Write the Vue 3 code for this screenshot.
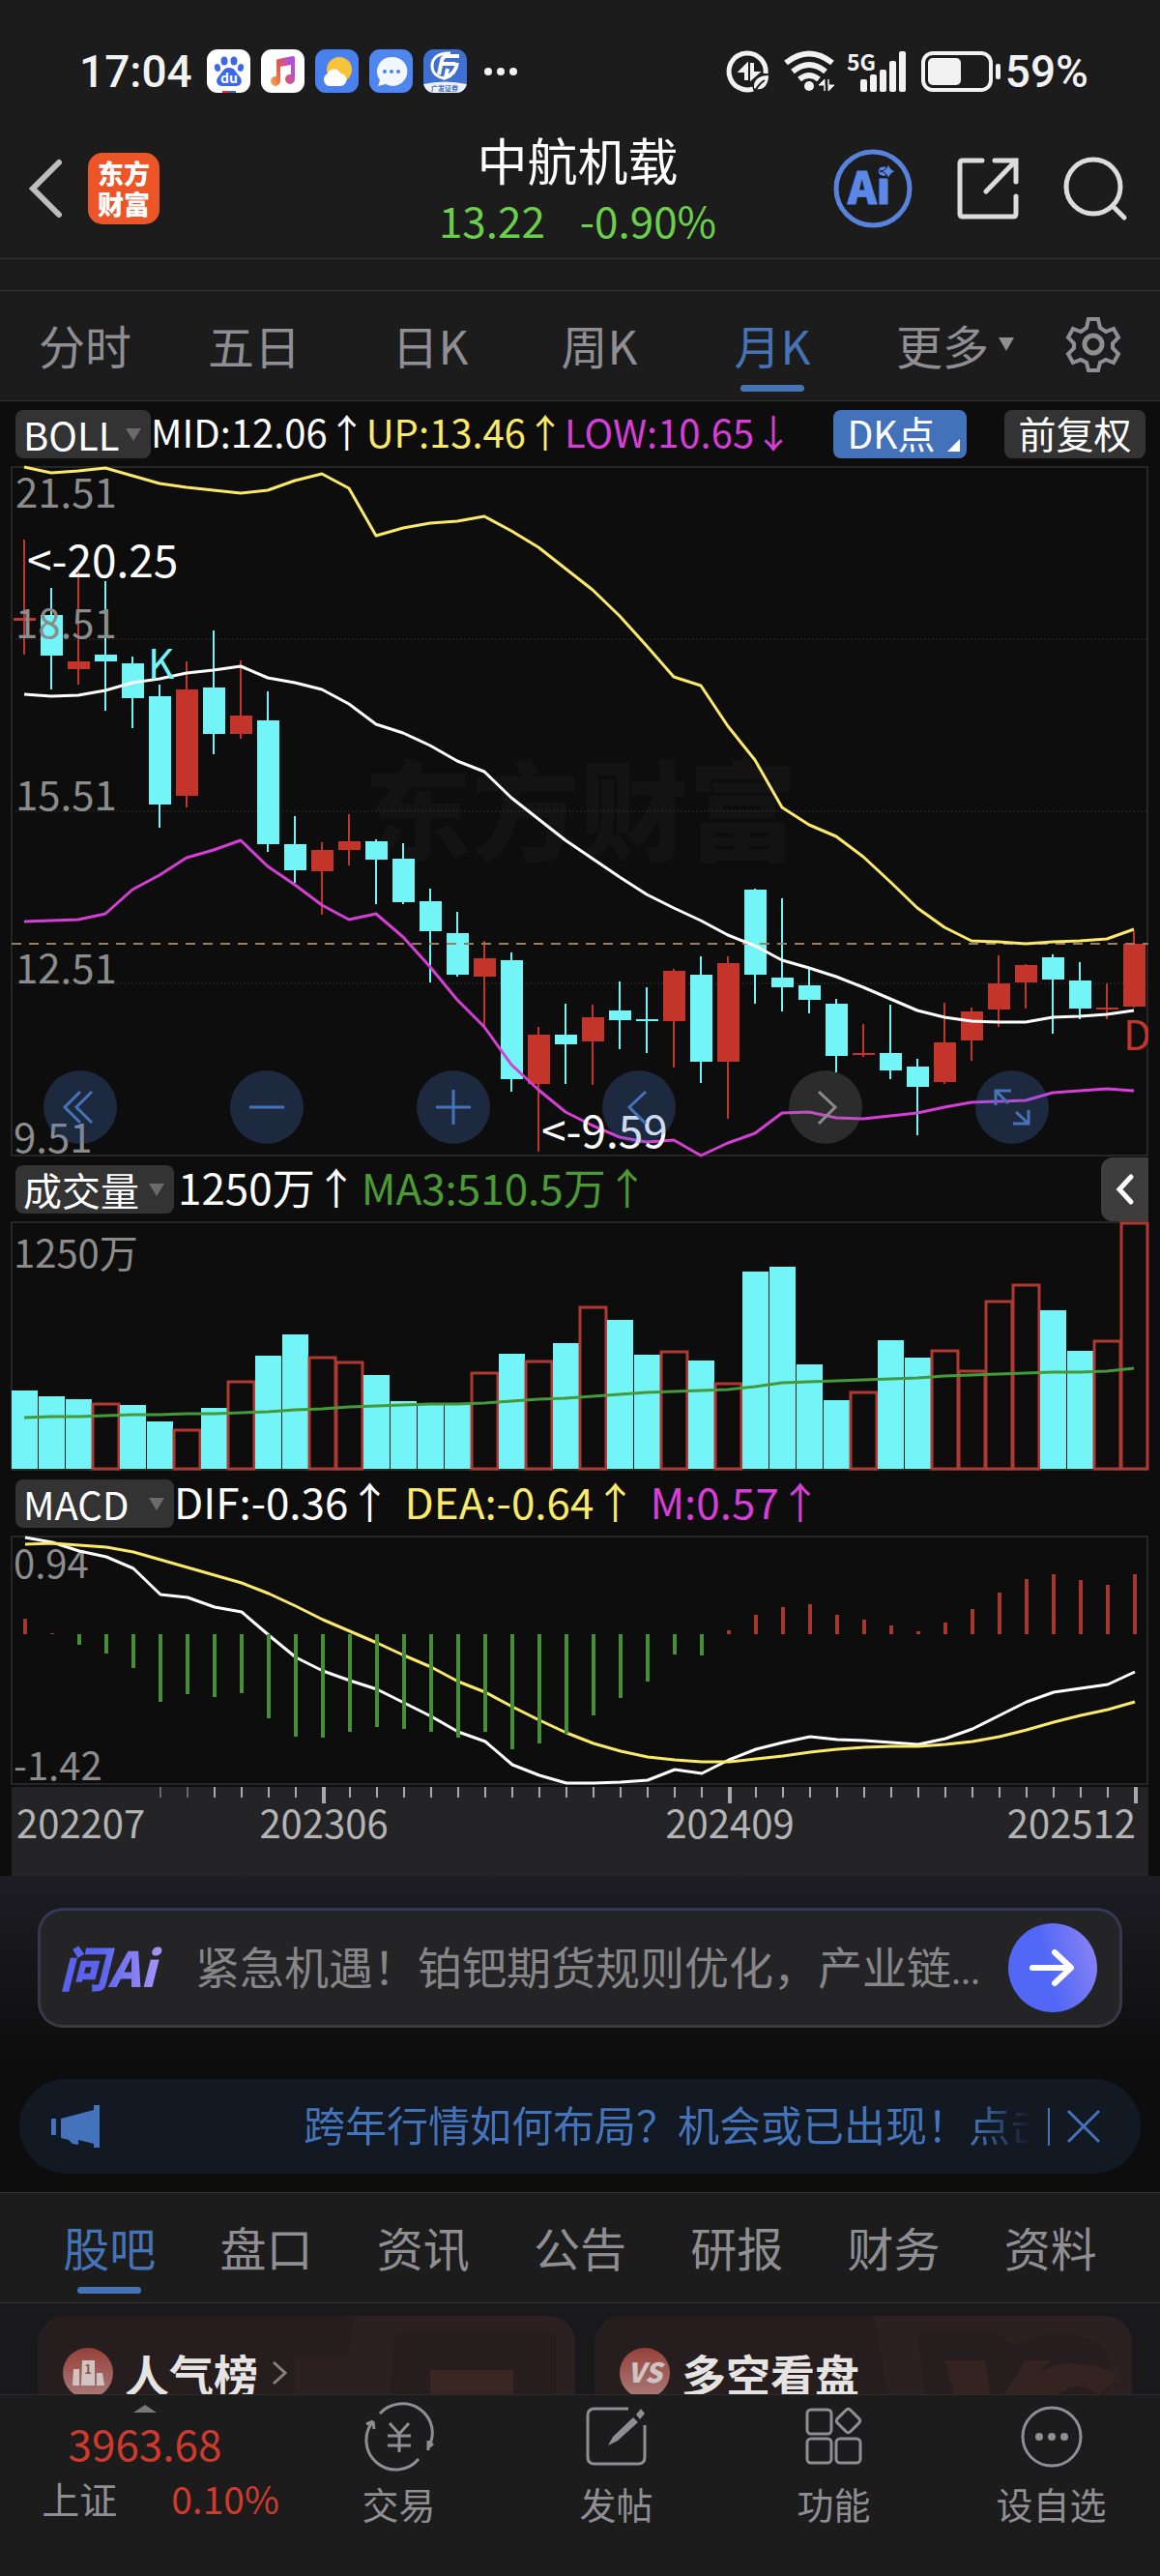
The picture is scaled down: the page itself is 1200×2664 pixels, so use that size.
<script setup>
const STEP = 28
const cx = (i) => 25 + STEP * i

// Monthly candles: [rising, high, body top, body bottom, low] in chart units
const candles = [
  [1, 76, 157, 160, 195], [0, 126, 154, 196, 231], [1, 108, 202, 210, 226], [0, 119, 195, 202, 253],
  [0, 197, 204, 240, 271], [0, 226, 238, 350, 374], [1, 202, 231, 341, 353], [0, 170, 229, 277, 298],
  [1, 201, 258, 277, 282], [0, 233, 263, 391, 399], [0, 362, 391, 418, 431], [1, 389, 397, 419, 464],
  [1, 360, 388, 397, 413], [0, 386, 388, 407, 453], [0, 390, 406, 451, 453], [0, 437, 450, 481, 534],
  [0, 461, 483, 526, 528], [1, 491, 509, 528, 580], [0, 503, 511, 634, 647], [1, 580, 588, 639, 709],
  [0, 556, 588, 598, 639], [1, 557, 570, 595, 640], [0, 533, 563, 573, 603], [0, 539, 572, 574, 607],
  [1, 520, 522, 574, 622], [0, 507, 526, 616, 638], [1, 507, 514, 616, 675], [0, 437, 438, 526, 556],
  [0, 447, 529, 539, 564], [0, 520, 537, 552, 566], [0, 551, 556, 610, 627], [1, 577, 607, 609, 611],
  [0, 557, 607, 625, 634], [0, 613, 621, 642, 692], [1, 555, 596, 637, 639], [1, 560, 564, 594, 615],
  [1, 506, 535, 562, 580], [1, 515, 516, 534, 561], [0, 505, 508, 531, 587], [0, 513, 532, 561, 572],
  [1, 535, 560, 562, 572], [1, 481, 494, 559, 560],
].map(([up, high, top, bottom, low], i) => ({ up, high, top, bottom, low, x: cx(i) }))

const bollUp = [1, 7, 5, 2, 10, 18, 22, 25, 28, 25, 15, 8, 23, 72, 64, 59, 57, 52, 67, 84, 106, 128, 155, 186, 218, 227, 269, 304, 353, 371, 383, 404, 430, 457, 477, 491, 492, 494, 492, 491, 489, 479]
const bollMid = [236, 238, 237, 232, 224, 220, 214, 211, 207, 219, 224, 231, 246, 267, 276, 289, 305, 316, 343, 365, 387, 406, 425, 443, 457, 470, 485, 496, 511, 519, 528, 539, 551, 563, 570, 574, 575, 575, 570, 569, 567, 563]
const bollLow = [471, 470, 469, 463, 438, 423, 405, 397, 387, 414, 433, 454, 469, 463, 487, 518, 552, 580, 619, 645, 668, 682, 694, 699, 697, 713, 700, 690, 669, 668, 674, 675, 672, 669, 663, 658, 657, 656, 648, 646, 644, 646]

const volumeTops = [175, 181, 184, 189, 190, 207, 216, 193, 166, 139, 117, 141, 146, 159, 186, 189, 189, 157, 137, 145, 126, 89, 102, 138, 135, 144, 168, 52, 47, 148, 185, 177, 123, 141, 134, 155, 83, 66, 92, 134, 124, 2]
const volumeRed = new Set([3, 6, 8, 11, 12, 17, 19, 21, 24, 26, 31, 34, 35, 36, 37, 40, 41])
const volumes = volumeTops.map((top, i) => ({ top, red: volumeRed.has(i), x: 12 + STEP * i }))
const volumeMa = [203, 202, 202, 201, 200, 200, 199, 199, 198, 197, 195, 194, 192, 191, 190, 189, 189, 188, 186, 184, 183, 181, 179, 177, 176, 175, 174, 171, 167, 166, 165, 164, 163, 162, 160, 159, 158, 157, 156, 156, 155, 152]

const macdEnds = [86, 101, 113, 122, 137, 172, 164, 167, 163, 189, 208, 209, 203, 198, 200, 203, 209, 203, 221, 215, 205, 186, 168, 151, 123, 124, 98, 82, 74, 71, 82, 87, 93, 99, 90, 76, 59, 45, 40, 46, 51, 40]
const macdBars = macdEnds.map((end, i) => ({ end, x: cx(i) + 1, up: end < 102 }))
const dif = [2, 7, 16, 22, 34, 61, 64, 74, 79, 103, 126, 140, 150, 159, 173, 187, 203, 213, 237, 248, 256, 256, 255, 253, 242, 246, 232, 221, 214, 208, 211, 212, 214, 216, 210, 200, 186, 172, 162, 158, 154, 141]
const dea = [9, 8, 10, 12, 17, 25, 33, 41, 49, 60, 73, 87, 99, 111, 124, 136, 151, 162, 177, 191, 204, 215, 223, 229, 232, 234, 234, 231, 228, 224, 221, 219, 218, 218, 216, 213, 208, 201, 193, 186, 180, 172]

const line = (ys, shift = 0) => ys.map((y, i) => `${cx(i) + shift},${y}`).join(' ')

const ticks = Array.from({ length: 37 }, (_, k) => {
  const i = k + 5
  return { x: cx(i) + 1, major: i === 11 || i === 26 || i === 41, faint: i < 7 }
})

const periods = ['分时', '五日', '日K', '周K', '月K']
const sections = ['股吧', '盘口', '资讯', '公告', '研报', '财务', '资料']
</script>

<template>
  <div class="app">
    <div class="status">
      <span class="clock">17:04</span>
      <svg class="app-icon first" viewBox="0 0 45 45">
        <rect width="45" height="45" rx="11" fill="#fff" />
        <g fill="#3c68e8">
          <ellipse cx="18" cy="12" rx="3.5" ry="4.5" /><ellipse cx="28" cy="12" rx="3.5" ry="4.5" />
          <ellipse cx="11" cy="19" rx="3" ry="4" transform="rotate(-15 11 19)" /><ellipse cx="35" cy="19" rx="3" ry="4" transform="rotate(15 35 19)" />
          <path d="M23 19c6 0 7 5 10 8 5 5 3 11-3 11H16c-6 0-8-6-3-11 3-3 4-8 10-8z" />
        </g>
        <text x="23" y="35" text-anchor="middle" font-size="14" font-weight="700" fill="#fff">du</text>
        <path d="M16 43h7v2h-7z" fill="#d33" /><path d="M23 43h7v2h-7z" fill="#36c" />
      </svg>
      <svg class="app-icon" viewBox="0 0 45 45">
        <defs><linearGradient id="music" x1="0" y1="1" x2="1" y2="0.6"><stop offset="0" stop-color="#f6b04c" /><stop offset=".5" stop-color="#e35a4c" /><stop offset="1" stop-color="#b94be0" /></linearGradient></defs>
        <rect width="45" height="45" rx="11" fill="#fff" />
        <path d="M16 12q0-2 2-2l15-3q2 0 2 2v22a5 5 0 1 1-4-5V16l-11 2v15a5 5 0 1 1-4-5z" fill="url(#music)" />
      </svg>
      <svg class="app-icon" viewBox="0 0 45 45">
        <rect width="45" height="45" rx="11" fill="#4a80ee" />
        <circle cx="25" cy="21" r="13" fill="#f8c33c" />
        <path d="M14 38a7 7 0 0 1-1-13 7 7 0 0 1 13 0 6 6 0 0 1 0 13z" fill="#fff" />
      </svg>
      <svg class="app-icon" viewBox="0 0 45 45">
        <rect width="45" height="45" rx="11" fill="#4f86f0" />
        <path d="M23 8a15 15 0 1 1-6 28l-8 2 2-6A15 15 0 0 1 23 8z" fill="#f2f6fe" />
        <g fill="#4f7ff0"><circle cx="16" cy="23" r="2" /><circle cx="23" cy="23" r="2" /><circle cx="30" cy="23" r="2" /></g>
      </svg>
      <svg class="app-icon" viewBox="0 0 45 45">
        <defs><clipPath id="gf"><rect width="45" height="45" rx="11" /></clipPath></defs>
        <g clip-path="url(#gf)">
          <rect width="45" height="45" fill="#3f6fd2" />
          <path d="M0 36q22-5 45 0v9H0z" fill="#eef1f8" />
          <path d="M28 4C16 3 9 9 9 17s6 12 13 13" fill="none" stroke="#fff" stroke-width="3" />
          <path d="M37 7H24q-4 0-5 5l-3 14M33 15H20M35 14q-2 12-12 15l2-9" fill="none" stroke="#fff" stroke-width="4" />
        </g>
        <text x="22" y="43" text-anchor="middle" font-size="7" font-weight="700" fill="#3f6fd2">广发证券</text>
      </svg>
      <svg class="dots" viewBox="0 0 34 8"><circle cx="4" cy="4" r="4" /><circle cx="17" cy="4" r="4" /><circle cx="30" cy="4" r="4" /></svg>

      <svg class="data-icon" viewBox="0 0 44 44">
        <path d="M39 24A19 19 0 1 0 26 40" fill="none" stroke="#f2f2f2" stroke-width="5" />
        <path d="M20 30V14l-8 8h6v8zM24 14v16l8-7h-6v-9z" fill="#f2f2f2" stroke="#f2f2f2" stroke-width="2" />
        <path d="M27 39c-1-9 6-13 15-13 0 9-5 16-13 14z" fill="#f2f2f2" /><path d="M28 42q4-7 10-11" stroke="#1c1c1c" stroke-width="2" fill="none" />
      </svg>
      <svg class="wifi-icon" viewBox="0 0 54 44">
        <g fill="none" stroke="#f2f2f2" stroke-width="6"><path d="M2 13Q26-6 50 13" /><path d="M9 22q17-14 34 0" /><path d="M16 30q10-8 20 0" /></g>
        <circle cx="26" cy="37" r="5" fill="#f2f2f2" />
        <path d="M42 42V30l-6 6h6zM46 30v12l6-6h-6z" fill="#f2f2f2" stroke="#f2f2f2" />
      </svg>
      <svg class="signal-icon" viewBox="0 0 62 44">
        <text x="0" y="21" font-size="23" font-weight="700" fill="#f2f2f2">5G</text>
        <g fill="#f2f2f2"><rect x="14" y="30" width="7" height="13" rx="2" /><rect x="24" y="25" width="7" height="18" rx="2" /><rect x="34" y="20" width="7" height="23" rx="2" /><rect x="44" y="11" width="7" height="32" rx="2" /><rect x="54" y="1" width="7" height="42" rx="2" /></g>
      </svg>
      <svg class="battery-icon" viewBox="0 0 84 44">
        <rect x="2" y="3" width="70" height="38" rx="10" fill="none" stroke="#f2f2f2" stroke-width="4" />
        <rect x="7" y="8" width="34" height="28" rx="5" fill="#f2f2f2" /><rect x="77" y="14" width="5" height="16" rx="2" fill="#f2f2f2" />
      </svg>
      <span class="clock">59%</span>
    </div>

    <header class="header">
      <div class="header-side">
        <button class="plain back" aria-label="返回">
          <svg viewBox="0 0 36 62"><path d="M32 4L5 31l27 27" fill="none" stroke="#bdbdbd" stroke-width="6" stroke-linecap="round" /></svg>
        </button>
        <a class="brand" href="#"><span>东方</span><span>财富</span></a>
      </div>
      <div class="quote">
        <h1>中航机载</h1>
        <p><span>13.22</span><span>-0.90%</span></p>
      </div>
      <div class="header-side right">
        <button class="plain ai" aria-label="Ai">
          <svg viewBox="0 0 82 82">
            <circle cx="41" cy="41" r="38" fill="none" stroke="#5783dd" stroke-width="5" />
            <text x="15" y="57" font-size="45" font-weight="900" fill="#5b88e6" stroke="#5b88e6" stroke-width="1">Ai</text>
            <path d="M57 14q1 9 9 9-8 1-9 9-1-8-9-9 8 0 9-9z" fill="#5b88e6" stroke="#1c1c1c" stroke-width="1" />
          </svg>
        </button>
        <button class="plain share" aria-label="分享">
          <svg viewBox="0 0 64 64"><path d="M26 3H6q-3 0-3 3v52q0 3 3 3h52q3 0 3-3V40M39 3h22v22M61 3L30 35" fill="none" stroke="#dcdcdc" stroke-width="5" stroke-linecap="round" /></svg>
        </button>
        <button class="plain search" aria-label="搜索">
          <svg viewBox="0 0 66 66"><circle cx="31" cy="31" r="28" fill="none" stroke="#dcdcdc" stroke-width="5" /><path d="M51 51l12 12" stroke="#dcdcdc" stroke-width="5" stroke-linecap="round" /></svg>
        </button>
      </div>
    </header>
    <div class="strip"></div>

    <nav class="periods">
      <button v-for="p in periods" :key="p" class="plain tab" :class="{ active: p === '月K' }">{{ p }}</button>
      <button class="plain tab more">更多<svg viewBox="0 0 16 14"><path d="M0 0h16L8 14z" fill="#8e8e93" /></svg></button>
      <button class="plain tab gear" aria-label="设置">
        <svg viewBox="0 0 58 58" fill="none" stroke="#8e8e93" stroke-width="4"><path d="M24 3h10l2 9 6 4 8-3 5 9-6 6v5l6 6-5 9-8-3-6 3-2 8H24l-2-8-6-3-8 3-5-9 6-6v-5l-6-6 5-9 8 3 6-4z" /><circle cx="29" cy="29" r="9" stroke-width="5" /></svg>
      </button>
    </nav>

    <main class="charts">
      <div class="legend boll">
        <label class="picker"><select aria-label="主图指标"><option>BOLL</option></select><i></i></label>
        <span class="white">MID:12.06↑</span><span class="yellow">UP:13.46↑</span><span class="pink">LOW:10.65↓</span>
        <button class="chip dk">DK点<i></i></button>
        <button class="chip adjust">前复权</button>
      </div>

      <div class="main-chart">
        <svg class="chart" viewBox="0 0 1200 714">
          <text class="watermark" x="600" y="400" text-anchor="middle">东方财富</text>
          <g class="grid"><path d="M12 179H1187M12 357H1187M12 535H1187" /></g>
          <path class="frame" d="M12 1H1187V713H12z" />
          <g v-for="c in candles" :key="c.x" :fill="c.up ? '#c3352b' : '#73f5f7'">
            <rect :x="c.x - 1" :y="c.high" width="2" :height="c.low - c.high" />
            <rect :x="c.x - 11" :y="c.top" width="23" :height="c.bottom - c.top" />
          </g>
          <path d="M12 494H1188" stroke="#94805f" stroke-width="2" stroke-dasharray="10 8" />
          <polyline class="curve" stroke="#d63fd6" :points="line(bollLow)" />
          <polyline class="curve" stroke="#fff" :points="line(bollMid)" />
          <polyline class="curve" stroke="#fbe96b" :points="line(bollUp)" />
          <g class="axis-text"><text x="16" y="43">21.51</text><text x="16" y="178">18.51</text><text x="16" y="356">15.51</text><text x="16" y="535">12.51</text><text x="14" y="710">9.51</text></g>
          <g class="note"><text x="28" y="115">&lt;-20.25</text><text x="560" y="705">&lt;-9.59</text></g>
          <text class="mark" x="153" y="220" fill="#73f5f7">K</text>
          <svg class="clip" x="1150" y="550" width="38" height="80" viewBox="0 0 38 80"><text class="mark" x="12" y="54" fill="#c3352b">D</text></svg>
        </svg>
        <div class="controls">
          <button aria-label="最左"><svg viewBox="0 0 76 76"><path d="M38 22L22 38l16 16M50 22L34 38l16 16" /></svg></button>
          <button aria-label="缩小"><svg viewBox="0 0 76 76"><path d="M20 38h36" /></svg></button>
          <button aria-label="放大"><svg viewBox="0 0 76 76"><path d="M20 38h36M38 20v36" /></svg></button>
          <button aria-label="向左"><svg viewBox="0 0 76 76"><path d="M45 22L28 38l17 17" /></svg></button>
          <button class="off" aria-label="向右"><svg viewBox="0 0 76 76"><path d="M31 22l17 16-17 17" /></svg></button>
          <button aria-label="全屏"><svg viewBox="0 0 76 76"><path d="M21 36V21h16M21 21l13 13M55 41v14H39M55 55L42 43" /></svg></button>
        </div>
      </div>

      <div class="legend big volume">
        <label class="picker wide"><select aria-label="副图指标一"><option>成交量</option></select><i></i></label>
        <span class="white">1250万↑</span><span class="green">MA3:510.5万↑</span>
        <button class="fold" aria-label="展开"><svg viewBox="0 0 20 32"><path d="M16 3L4 16l12 13" fill="none" stroke="#fff" stroke-width="5" stroke-linecap="round" /></svg></button>
      </div>
      <svg class="chart" viewBox="0 0 1200 258">
        <path class="frame" d="M12 1H1187V257H12z" />
        <template v-for="v in volumes" :key="v.x">
          <rect v-if="v.red" :x="v.x" :y="v.top" width="27" :height="256 - v.top" fill="#0d0d0d" stroke="#b03a32" stroke-width="3" />
          <rect v-else :x="v.x" :y="v.top" width="27" :height="256 - v.top" fill="#73f5f7" />
        </template>
        <polyline class="curve" stroke="#45993b" :points="line(volumeMa)" />
        <text class="axis-text small" x="14" y="48">1250万</text>
      </svg>

      <div class="legend big macd">
        <label class="picker wide"><select aria-label="副图指标二"><option>MACD</option></select><i></i></label>
        <span class="white">DIF:-0.36↑</span><span class="yellow">DEA:-0.64↑</span><span class="pink">M:0.57↑</span>
      </div>
      <svg class="chart" viewBox="0 0 1200 258">
        <path class="frame" d="M12 1H1187V257H12z" />
        <g class="axis-text small"><text x="14" y="44">0.94</text><text x="14" y="253">-1.42</text></g>
        <polyline class="curve" stroke="#fff" :points="line(dif, 1)" />
        <polyline class="curve" stroke="#fbe96b" :points="line(dea, 1)" />
        <rect v-for="b in macdBars" :key="b.x" :x="b.x - 2" :y="Math.min(b.end, 102)" width="4" :height="Math.abs(b.end - 102)" :fill="b.up ? '#a8352e' : '#468f37'" />
      </svg>
      <svg class="chart" viewBox="0 0 1200 94">
        <rect x="12" y="2" width="1176" height="92" fill="#242427" />
        <rect v-for="t in ticks" :key="t.x" :x="t.x - 1" y="2" :width="t.major ? 4 : 2" :height="t.major ? 17 : 11" fill="#a8a8a8" :opacity="t.faint ? 0.5 : 1" />
        <g class="dates"><text x="17" y="55">202207</text><text x="335" y="55" text-anchor="middle">202306</text><text x="755" y="55" text-anchor="middle">202409</text><text x="1175" y="55" text-anchor="end">202512</text></g>
      </svg>
    </main>

    <section class="ask">
      <div class="ask-box">
        <b class="ask-logo">问Ai</b>
        <a class="ask-text" href="#">紧急机遇！铂钯期货规则优化，产业链<small>...</small></a>
        <button class="go" aria-label="提问"><svg viewBox="0 0 48 40"><path d="M3 20h40M26 4l17 16-17 16" fill="none" stroke="#fff" stroke-width="6" stroke-linecap="round" stroke-linejoin="round" /></svg></button>
      </div>
    </section>

    <section class="promo-wrap">
      <div class="promo">
        <svg class="horn" viewBox="0 0 50 44" fill="#4573bb"><path d="M0 14h5v17H0zM10 14l34-9V0h6v44h-6v-4l-16-4v5l-6-1-4-4-8-2z" /></svg>
        <a href="#">跨年行情如何布局？机会或已出现！点击</a>
        <i class="bar"></i>
        <button class="plain close" aria-label="关闭"><svg viewBox="0 0 36 36"><path d="M2 2l32 32M34 2L2 34" stroke="#4573bb" stroke-width="3" /></svg></button>
      </div>
    </section>

    <nav class="sections">
      <button v-for="s in sections" :key="s" class="plain tab" :class="{ active: s === '股吧' }">{{ s }}</button>
    </nav>

    <section class="feed">
      <a class="card" href="#">
        <svg class="art" viewBox="0 0 290 82"><path d="M62 0h228v82h-20V18H104l-6 64H0V40h56z" fill="#2c2120" /><path d="M140 56h86v26h-86z" fill="#392521" /></svg>
        <svg class="badge" viewBox="0 0 52 52"><defs><linearGradient id="badge" x1="0" y1="0" x2="0" y2="1"><stop offset="0" stop-color="#97403a" /><stop offset="1" stop-color="#a97b78" /></linearGradient></defs><circle cx="26" cy="26" r="26" fill="url(#badge)" /><g fill="#cdc4c3"><path d="M11 22h6v17h-7zM20 13h13v26H19zM35 26h6l2 13h-8z" /></g><text x="26" y="27" text-anchor="middle" font-size="13" font-weight="700" fill="#97504b">1</text></svg>
        <b>人气榜</b>
        <svg class="chev" viewBox="0 0 16 26"><path d="M2 2l12 11L2 24" fill="none" stroke="#858080" stroke-width="3" /></svg>
      </a>
      <a class="card" href="#">
        <svg class="art" viewBox="0 0 290 82"><path d="M23 0h267v82h-30q30-60-50-64l-44 12-16-12H68l8 64H38z" fill="#2c2120" /><path d="M96 46h42l6 36h-38zM156 82l24-36h26l-14 14q30-22 84 0l-20 22q-22-18-44 0z" fill="#342321" /></svg>
        <svg class="badge" viewBox="0 0 52 52"><circle cx="26" cy="26" r="26" fill="url(#badge)" /><text x="26" y="36" text-anchor="middle" font-size="28" font-weight="900" font-style="italic" fill="#cdc4c3">VS</text></svg>
        <b>多空看盘</b>
      </a>
    </section>

    <footer class="bottom">
      <a class="index" href="#">
        <svg viewBox="0 0 24 8"><path d="M0 8L12 0l12 8z" fill="#77777a" /></svg>
        <strong>3963.68</strong>
        <span><em>上证</em><strong class="pct">0.10%</strong></span>
      </a>
      <a class="nav-item" href="#">
        <svg viewBox="0 0 72 64" fill="none" stroke="#8e8e93" stroke-width="3"><path d="M16 8A31 30 0 0 1 66 43M66 43l5-4M66 46V36M56 55A30 30 0 0 1 9 16M9 16l-7 3M9 16l1 8" /><path d="M26 18l10 11 10-11M36 29v19M24 31h24M24 41h24" /></svg>交易
      </a>
      <a class="nav-item" href="#">
        <svg viewBox="0 0 72 64" fill="none" stroke="#8e8e93" stroke-width="3"><path d="M48 3H13q-7 0-7 7v43q0 7 7 7h45q7 0 7-7V20" /><path d="M27 41l5-9L53 12l5 5-21 19zM56 9l5-6 4 5-5 6z" fill="#8e8e93" stroke="none" /></svg>发帖
      </a>
      <a class="nav-item" href="#">
        <svg viewBox="0 0 72 64" fill="none" stroke="#8e8e93" stroke-width="3"><rect x="8" y="4" width="25" height="25" rx="4" /><rect x="8" y="34" width="25" height="25" rx="4" /><rect x="38" y="34" width="25" height="25" rx="4" /><rect x="41" y="6" width="19" height="19" rx="3" transform="rotate(45 50.5 15.5)" /></svg>功能
      </a>
      <a class="nav-item" href="#">
        <svg viewBox="0 0 72 64" fill="none" stroke="#8e8e93" stroke-width="3"><circle cx="36" cy="32" r="30" /><g fill="#8e8e93" stroke="none"><circle cx="23" cy="32" r="4" /><circle cx="36" cy="32" r="4" /><circle cx="49" cy="32" r="4" /></g></svg>设自选
      </a>
    </footer>
  </div>
</template>

<style>
body { background: #1c1c1c; }
</style>

<style scoped>
.app { background: #1c1c1c; color: #8e8e93; font-family: "Noto Sans CJK SC", "Noto Sans", sans-serif; font-size: 40px; }
.app * { box-sizing: border-box; }
.app svg { display: block; flex: none; overflow: visible; }
.app svg.clip { overflow: hidden; }
button, select { font: inherit; color: inherit; margin: 0; padding: 0; border: 0; background: none; }
a { color: inherit; text-decoration: none; }
i, em { font-style: normal; }
strong { font-weight: 400; }

.status { display: flex; align-items: center; gap: 11px; height: 122px; padding: 25px 74px 0 82px; }
.clock { color: #f2f2f2; font: 500 46px/50px Roboto, "Noto Sans CJK SC", sans-serif; }
.app-icon { width: 45px; height: 45px; }
.app-icon.first { margin-left: 4px; }
.dots { width: 34px; height: 8px; margin: 0 auto 0 7px; fill: #f2f2f2; }
.data-icon { width: 44px; height: 44px; }
.wifi-icon { width: 54px; height: 44px; margin-left: 3px; }
.signal-icon { width: 62px; height: 44px; }
.battery-icon { width: 84px; height: 44px; margin-left: 4px; }
.status .clock:last-child { margin-left: -8px; }

.header { display: grid; grid-template-columns: 1fr auto 1fr; align-items: center; height: 146px; padding: 0 34px 0 29px; border-bottom: 1px solid #333; }
.header-side { display: flex; align-items: center; gap: 26px; }
.header-side.right { justify-content: flex-end; gap: 46px; }
.back svg { width: 36px; height: 62px; }
.brand { display: flex; flex-direction: column; align-items: center; justify-content: center; width: 74px; height: 74px; border-radius: 15px; background: #ec5528; color: #fff; font-size: 27px; font-weight: 900; line-height: 32px; }
.quote { text-align: center; }
.quote h1 { margin: 0; color: #fff; font-size: 52px; font-weight: 400; line-height: 64px; }
.quote p { display: flex; justify-content: center; gap: 36px; margin: 0; color: #6bcf4b; font-size: 44px; line-height: 60px; }
.ai svg { width: 82px; height: 82px; }
.share svg { width: 64px; height: 64px; }
.search svg { width: 66px; height: 66px; }
.strip { height: 33px; border-bottom: 1px solid #333; }

.periods { display: grid; grid-template-columns: 176fr 174fr 190fr 160fr 198fr 180fr 106fr; height: 114px; padding-right: 16px; border-bottom: 1px solid #333; }
.tab { position: relative; display: flex; align-items: center; justify-content: center; padding-bottom: 4px; font-size: 48px; line-height: 60px; white-space: nowrap; }
.tab.active { color: #4573b5; }
.tab.active::after { content: ""; position: absolute; bottom: 9px; left: calc(50% - 33px); width: 66px; height: 7px; border-radius: 4px; background: #4573b5; }
.more svg { width: 16px; height: 14px; margin-left: 10px; }
.gear svg { width: 58px; height: 58px; }

.charts { background: #0d0d0d; }
.chart { width: 100%; height: auto; }
.legend { display: flex; align-items: center; height: 67px; padding: 0 15px 0 16px; white-space: nowrap; line-height: 50px; }
.legend > span { padding-bottom: 5px; }
.big { padding-right: 12px; font-size: 44px; }
.volume { gap: 4px; }
.macd > span + span { margin-left: 14px; }
.white { color: #fff; }
.yellow { color: #fbe96b; }
.pink { color: #d63fd6; }
.green { color: #4c9a35; }
.picker { position: relative; width: 140px; height: 50px; flex: none; color: #fff; font-size: 40px; }
.picker.wide { width: 164px; }
.picker select { appearance: none; width: 100%; height: 100%; padding: 0 0 4px 8px; border-radius: 8px; background: #333; }
.picker i { position: absolute; right: 10px; top: 19px; border: 8px solid transparent; border-top: 13px solid #6b6b6b; border-bottom: 0; pointer-events: none; }
.chip { position: relative; height: 50px; padding-bottom: 4px; border-radius: 8px; color: #fff; font-size: 39px; line-height: 46px; }
.dk { width: 138px; margin-left: auto; padding-right: 18px; background: #4472ba; }
.dk i { position: absolute; right: 7px; bottom: 7px; border-left: 13px solid transparent; border-bottom: 13px solid #fff; }
.adjust { width: 146px; margin-left: 39px; background: #333; }
.fold { display: flex; align-items: center; justify-content: center; width: 49px; height: 66px; margin-left: auto; border-radius: 12px 0 0 12px; background: #3d3d3d; }
.fold svg { width: 20px; height: 32px; }

.main-chart { position: relative; }
.watermark { font-size: 112px; font-weight: 900; fill: #131313; }
.frame { fill: none; stroke: #262626; stroke-width: 2; }
.grid { stroke: #303030; stroke-width: 1; stroke-dasharray: 2 2; }
.curve { fill: none; stroke-width: 3; stroke-linejoin: round; }
.axis-text { font-size: 42px; fill: #8c8c8c; }
.small { font-size: 40px; }
.note { font-size: 46px; fill: #fff; }
.mark { font-size: 42px; }
.dates { font-size: 40px; fill: #b4b4b4; }
.controls { position: absolute; left: 45px; right: 115px; bottom: 13px; display: flex; justify-content: space-between; }
.controls button { width: 76px; height: 76px; border-radius: 50%; background: rgba(70, 120, 200, 0.27); }
.controls svg { width: 76px; height: 76px; fill: none; stroke: #4573b9; stroke-width: 3; }
.controls .off { background: rgba(130, 130, 130, 0.27); }
.controls .off svg { stroke: #8c8c8c; }

.ask { padding: 33px 39px 53px; background: linear-gradient(#1e1d24, #0d0d0d 90%); }
.ask-box { display: flex; align-items: center; height: 124px; padding: 0 23px 0 20px; border: 3px solid #38375a; border-color: #38375a #38384a #3a3a3c; border-radius: 26px; background: #242427; }
.ask-logo { width: 140px; padding-bottom: 4px; font-size: 50px; font-weight: 900; font-style: italic; line-height: 60px; color: transparent; background: linear-gradient(90deg, #5a63ee 30%, #a795f6 75%); background-clip: text; }
.ask-text { flex: 1; min-width: 0; overflow: hidden; color: #868688; font-size: 46px; line-height: 68px; padding-bottom: 2px; white-space: nowrap; }
.ask-text small { font-size: 36px; }
.go { display: flex; align-items: center; justify-content: center; flex: none; width: 92px; height: 92px; border-radius: 50%; background: linear-gradient(75deg, #5267f5 45%, #8f86f5); }
.go svg { width: 48px; height: 40px; }

.promo-wrap { padding: 0 20px 19px; background: #0d0d0d; }
.promo { display: flex; align-items: center; height: 98px; padding: 0 41px 0 33px; border-radius: 49px; background: #121922; color: #4573b9; }
.horn { width: 50px; height: 44px; }
.promo a { flex: 1; min-width: 0; margin-left: 211px; padding-bottom: 6px; overflow: hidden; font-size: 43px; line-height: 64px; white-space: nowrap; mask-image: linear-gradient(90deg, #000 92%, transparent); }
.bar { width: 2px; height: 39px; margin: 0 17px; background: #4573b9; }
.close svg { width: 36px; height: 36px; }

.sections { display: flex; height: 115px; padding: 0 32px; border: solid #333; border-width: 1px 0; }
.sections .tab { flex: 1; }

.feed { display: flex; gap: 20px; height: 94px; padding: 13px 29px 0 39px; overflow: hidden; background: #19191b; }
.card { position: relative; flex: 1; display: flex; align-items: center; height: 118px; padding-left: 26px; border-radius: 28px 28px 0 0; background: #261e1e; color: #e6e3e3; overflow: hidden; }
.card b { position: relative; margin: 0 14px 0 12px; font-size: 46px; line-height: 60px; }
.badge { position: relative; width: 52px; height: 52px; }
.chev { position: relative; width: 16px; height: 26px; }
.art { position: absolute; top: 0; right: 0; width: 290px; height: 82px; }

.bottom { display: flex; height: 188px; border-top: 1px solid #2b2b2b; background: #1c1c1c; }
.index { width: 25%; display: flex; flex-direction: column; align-items: center; padding: 10px 0 0; color: #cf3a2c; }
.index svg { width: 24px; height: 8px; }
.index strong { font-size: 44px; line-height: 62px; }
.index span { display: flex; gap: 56px; align-items: center; margin-left: 32px; line-height: 52px; }
.index em { color: #8e8e93; font-size: 39px; }
.index .pct { font-size: 39px; line-height: 52px; }
.nav-item { flex: 1; display: flex; flex-direction: column; align-items: center; padding-top: 11px; font-size: 38px; line-height: 56px; }
.nav-item svg { width: 72px; height: 64px; margin-bottom: 9px; }
</style>
